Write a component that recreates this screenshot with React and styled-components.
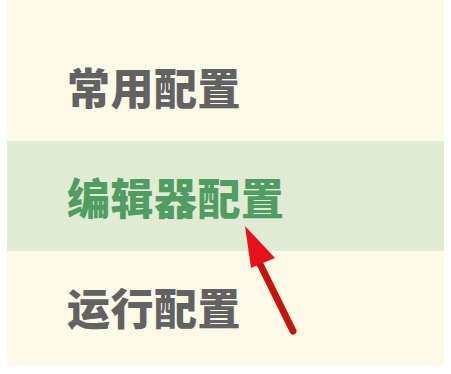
import React from "react";
import styled, { createGlobalStyle } from "styled-components";

const Global = createGlobalStyle`
  html, body { margin: 0; padding: 0; background: #ffffff; }
  body { font-family: "Noto Sans CJK SC", "Noto Sans", sans-serif; }
`;

const Panel = styled.div`
  position: relative;
  margin-left: 7px;
  width: 437px;
  height: 365px;
  background: #fdf9e7;
  padding-top: 31px;
  box-sizing: border-box;
  display: flex;
  flex-direction: column;
`;

const Item = styled.div`
  height: 110px;
  display: flex;
  align-items: center;
  padding-left: 60px;
  background: ${(p) => (p.$active ? "#e1ebd4" : "transparent")};
  color: ${(p) => (p.$active ? "#4f9d63" : "#626262")};
  font-size: 43px;
  font-weight: 900;
  letter-spacing: 0.5px;
  line-height: 1;
`;

const Arrow = styled.svg`
  position: absolute;
  left: 225px;
  top: 222px;
  pointer-events: none;
`;

export default function App() {
  const items = ["常用配置", "编辑器配置", "运行配置"];
  return (
    <>
      <Global />
      <Panel>
        {items.map((t, i) => (
          <Item key={t} $active={i === 1}>
            {t}
          </Item>
        ))}
        <Arrow width="80" height="120" viewBox="0 0 80 120">
          <line x1="61" y1="109" x2="27" y2="40" stroke="#c5150f" strokeWidth="7" strokeLinecap="round" />
          <polygon points="13,4 43,36 19,46" fill="#e8101a" />
        </Arrow>
      </Panel>
    </>
  );
}
